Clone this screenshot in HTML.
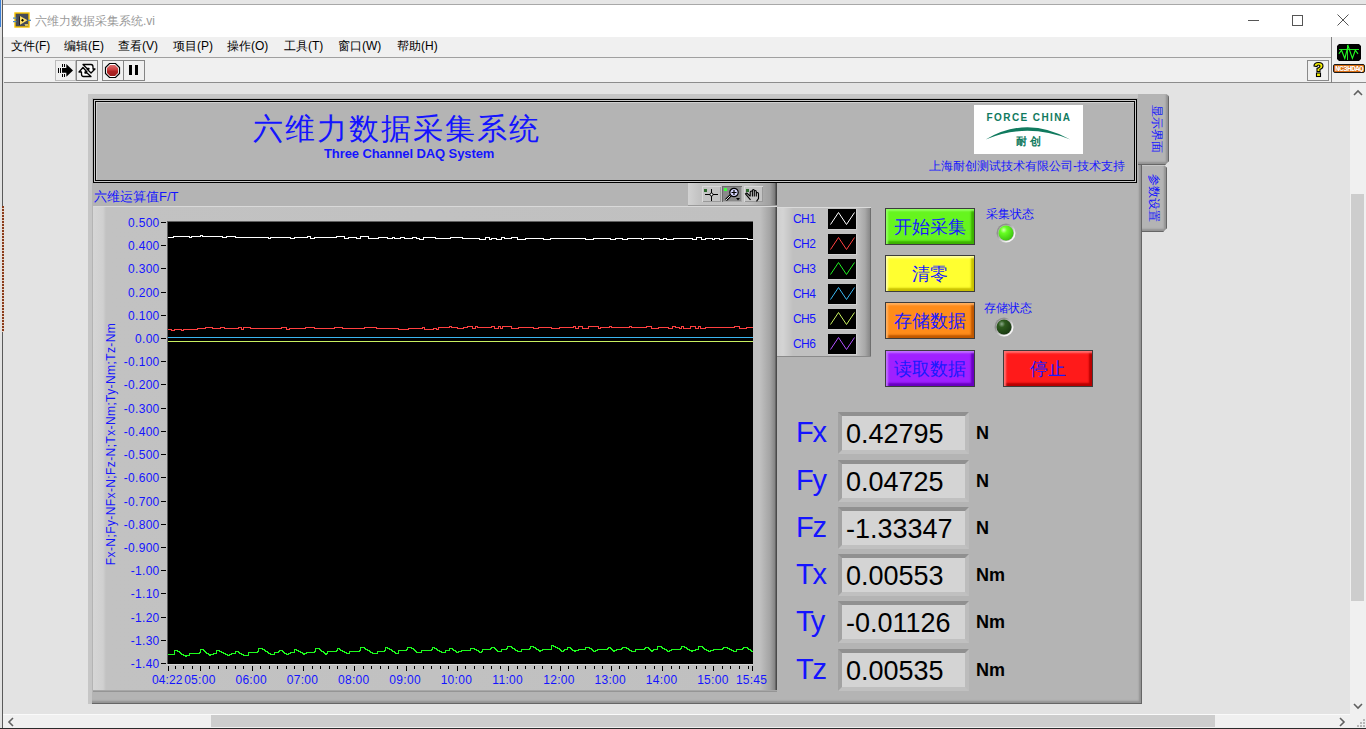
<!DOCTYPE html><html><head><meta charset="utf-8"><style>
*{margin:0;padding:0;box-sizing:border-box}
html,body{width:1366px;height:729px;overflow:hidden;background:#e3e3e3;font-family:"Liberation Sans",sans-serif;position:relative}
.a{position:absolute}
.blue{color:#1414ff}
</style></head><body><div class="a" style="left:0;top:0;width:1366px;height:5px;background:#e6e6e6;border-bottom:1px solid #a8a8a8"></div>
<div class="a" style="left:0;top:0;width:3px;height:729px;background:#e3e3e3;border-right:1px solid #5a5a5a"></div>
<div class="a" style="left:2px;top:206px;width:2px;height:126px;background:repeating-linear-gradient(180deg,#8a3c1c 0,#8a3c1c 2px,#e8d0c0 2px,#e8d0c0 3px)"></div>
<div class="a" style="left:0;top:0;width:1px;height:27px;background:#3b7fd6"></div>
<div class="a" style="left:3px;top:5px;width:1363px;height:32px;background:#ffffff"></div>
<svg class="a" style="left:13px;top:12px" width="18" height="17"><rect x="2" y="1" width="14" height="14" fill="#454a58" stroke="#f7c200" stroke-width="1.4"/><path d="M6.5 4.5 V13" stroke="#222" stroke-width="1"/><path d="M7 4 L14.5 8.3 L7 12.8 Z" fill="#ffe066"/><path d="M9.5 6.8 L11 8.3 L9.5 9.8 L8 8.3 Z" fill="#000"/><path d="M12 12 L13 14 L14 12 L15 14" stroke="#ffe066" stroke-width="1" fill="none"/><rect x="0" y="5.5" width="3.5" height="1.2" fill="#4a8ac0"/><rect x="0" y="9" width="3.5" height="1.2" fill="#4a8ac0"/><rect x="15" y="7.7" width="3" height="1.2" fill="#4a8ac0"/></svg>
<div class="a" style="left:35px;top:13px;font-size:12px;color:#9a9a9a;white-space:nowrap">六维力数据采集系统.vi</div>
<div class="a" style="left:1248px;top:20px;width:11px;height:1px;background:#555"></div>
<div class="a" style="left:1292px;top:15px;width:11px;height:11px;border:1px solid #555"></div>
<svg class="a" style="left:1337px;top:14px" width="12" height="12"><path d="M0.5 0.5 L11.5 11.5 M11.5 0.5 L0.5 11.5" stroke="#555" stroke-width="1"/></svg>
<div class="a" style="left:4px;top:37px;width:1362px;height:21px;background:#f0f0f0"></div>
<div class="a" style="left:11px;top:38px;font-size:12px;color:#000;white-space:nowrap">文件(F)</div>
<div class="a" style="left:64px;top:38px;font-size:12px;color:#000;white-space:nowrap">编辑(E)</div>
<div class="a" style="left:118px;top:38px;font-size:12px;color:#000;white-space:nowrap">查看(V)</div>
<div class="a" style="left:173px;top:38px;font-size:12px;color:#000;white-space:nowrap">项目(P)</div>
<div class="a" style="left:227px;top:38px;font-size:12px;color:#000;white-space:nowrap">操作(O)</div>
<div class="a" style="left:284px;top:38px;font-size:12px;color:#000;white-space:nowrap">工具(T)</div>
<div class="a" style="left:338px;top:38px;font-size:12px;color:#000;white-space:nowrap">窗口(W)</div>
<div class="a" style="left:397px;top:38px;font-size:12px;color:#000;white-space:nowrap">帮助(H)</div>
<div class="a" style="left:4px;top:57px;width:1329px;height:1px;background:#a0a0a0"></div>
<div class="a" style="left:4px;top:58px;width:1329px;height:24px;background:#f0f0f0"></div>
<div class="a" style="left:4px;top:82px;width:1362px;height:1px;background:#8c8c8c"></div>
<div class="a" style="left:1331px;top:37px;width:1px;height:46px;background:#808080"></div>
<div class="a" style="left:1332px;top:37px;width:34px;height:45px;background:#f0f0f0"></div>
<svg class="a" style="left:1337px;top:44px" width="24" height="17" shape-rendering="crispEdges"><path d="M2 0 H22 L24 2 V15 L22 17 H2 L0 15 V2 Z" fill="#000" shape-rendering="auto"/><rect x="2" y="5" width="20" height="1" fill="#22dd22"/><rect x="10" y="1" width="1" height="15" fill="#22dd22"/><path d="M1.9 9.8 L4.5 6.2 L7.8 14.4 L11.1 1.9 L15.4 14.4 L18.3 6.2 L21 9.8" stroke="#22ff22" stroke-width="1.1" fill="none" shape-rendering="auto"/></svg>
<div class="a" style="left:1333px;top:64px;width:32px;height:9px;background:#d86c12;border:1px solid #1a1a1a;border-radius:2px;font-family:'Liberation Mono',monospace;font-size:8px;line-height:7px;color:#fff;font-weight:bold;text-align:center;letter-spacing:-0.8px;white-space:nowrap;overflow:hidden">NC3HDAQ</div>
<div class="a" style="left:1307px;top:60px;width:22px;height:21px;border:1px solid #8a8a8a;background:#f0f0f0"></div>
<svg class="a" style="left:1311px;top:61px" width="15" height="17"><path d="M3 5 Q3 1.5 7.5 1.5 Q12 1.5 12 5 Q12 7.5 9 8.5 V10.5 H6 V7.5 Q9 6.5 9 5 Q9 4 7.5 4 Q6 4 6 5.5 Z" fill="#f5f000" stroke="#000" stroke-width="1.1"/><rect x="5.5" y="12" width="4" height="3.5" fill="#f5f000" stroke="#000" stroke-width="1.1"/></svg>
<div class="a" style="left:55px;top:60px;width:21px;height:21px;border:1px solid #bcbcbc;background:#efefef"></div>
<svg class="a" style="left:54px;top:60px" width="22" height="20" shape-rendering="crispEdges"><path d="M12.3 4 L19 10.4 L12.3 16.8 V12.8 H8 V8 H12.3 Z" fill="#000" shape-rendering="auto"/><rect x="4" y="8" width="1" height="5" fill="#000"/><rect x="6" y="8" width="1" height="5" fill="#000"/><rect x="8" y="4" width="1" height="3" fill="#000"/><rect x="10" y="4" width="1" height="3" fill="#000"/><rect x="8" y="14" width="1" height="3" fill="#000"/><rect x="10" y="14" width="1" height="3" fill="#000"/></svg>
<div class="a" style="left:76px;top:60px;width:22px;height:21px;border:1px solid #858585;background:#f0f0f0"></div>
<svg class="a" style="left:76px;top:60px" width="22" height="21"><path d="M7 4.5 H15 Q17 4.5 17 7 V9 H19 L15 13 L11 9 H13 V8.5 H11 Z" fill="#fff" stroke="#000" stroke-width="1.3" stroke-linejoin="round"/><path d="M15 16.5 H7.5 Q5.5 16.5 5.5 14 V12 H3 L7 7.5 L11 12 H9 V13 H11 Z" fill="#fff" stroke="#000" stroke-width="1.3" stroke-linejoin="round"/></svg>
<div class="a" style="left:102px;top:60px;width:22px;height:21px;border:1px solid #858585;background:#f0f0f0"></div>
<svg class="a" style="left:104px;top:62px" width="17" height="17"><defs><linearGradient id="stopg" x1="0" y1="0" x2="0" y2="1"><stop offset="0" stop-color="#e07070"/><stop offset="0.45" stop-color="#c83c3c"/><stop offset="0.55" stop-color="#b02424"/><stop offset="1" stop-color="#a01e1e"/></linearGradient></defs><path d="M5.5 1.5 H11.5 L15.5 5.5 V11.5 L11.5 15.5 H5.5 L1.5 11.5 V5.5 Z" fill="#fff" stroke="#000" stroke-width="1.2"/><path d="M6 3 H11 L14 6 V11 L11 14 H6 L3 11 V6 Z" fill="url(#stopg)"/></svg>
<div class="a" style="left:123px;top:60px;width:22px;height:21px;border:1px solid #858585;background:#f0f0f0"></div>
<div class="a" style="left:129px;top:65px;width:3px;height:10px;background:#000"></div>
<div class="a" style="left:135px;top:65px;width:3px;height:10px;background:#000"></div>
<div class="a" style="left:1350px;top:83px;width:16px;height:630px;background:#f0f0f0"></div>
<div class="a" style="left:1351px;top:194px;width:13px;height:407px;background:#cdcdcd"></div>
<svg class="a" style="left:1352px;top:88px" width="12" height="10"><path d="M2 7 L6 3 L10 7" stroke="#606060" stroke-width="1.6" fill="none"/></svg>
<svg class="a" style="left:1352px;top:702px" width="12" height="10"><path d="M2 2 L6 6 L10 2" stroke="#606060" stroke-width="1.6" fill="none"/></svg>
<div class="a" style="left:3px;top:714px;width:1347px;height:15px;background:#f0f0f0;border-top:1px solid #fafafa"></div>
<div class="a" style="left:211px;top:715px;width:1004px;height:12px;background:#cdcdcd"></div>
<svg class="a" style="left:6px;top:716px" width="10" height="12"><path d="M7 2 L3 6 L7 10" stroke="#606060" stroke-width="1.6" fill="none"/></svg>
<svg class="a" style="left:1337px;top:716px" width="10" height="12"><path d="M3 2 L7 6 L3 10" stroke="#606060" stroke-width="1.6" fill="none"/></svg>
<div class="a" style="left:1350px;top:713px;width:16px;height:15px;background:#f0f0f0"></div>
<svg class="a" style="left:1355px;top:717px" width="11" height="11" shape-rendering="crispEdges"><rect x="8" y="2" width="2" height="2" fill="#b8b8b8"/><rect x="5" y="5" width="2" height="2" fill="#b8b8b8"/><rect x="8" y="5" width="2" height="2" fill="#b8b8b8"/><rect x="2" y="8" width="2" height="2" fill="#b8b8b8"/><rect x="5" y="8" width="2" height="2" fill="#b8b8b8"/><rect x="8" y="8" width="2" height="2" fill="#b8b8b8"/></svg>
<div class="a" style="left:0;top:728px;width:1366px;height:1px;background:#2b2b2b"></div>
<div class="a" style="left:88px;top:94px;width:1054px;height:610px;background:#b4b4b4;box-shadow:inset 5px 5px 0 -1px #c6c6c6, inset -1px -1px 0 #666, inset -3px -3px 2px #939393"></div>
<div class="a" style="left:1138px;top:94px;width:31px;height:71px;background:#b4b4b4;clip-path:polygon(0 0,27px 0,29px 0.5px,30.5px 2px,31px 4px,31px 67px,27px 71px,0 71px);box-shadow:inset -1px -1px 0 #666, inset -3px -3px 2px #939393"></div>
<div class="a" style="left:1142px;top:165px;width:25px;height:67px;background:#b4b4b4;clip-path:polygon(0 0,22px 0,25px 3px,25px 63px,21px 67px,0 67px);box-shadow:inset 0 1px 0 #c8c8c8, inset -1px -1px 0 #666, inset -3px -3px 2px #939393"></div>
<div class="a" style="left:1131px;top:122px;width:52px;height:14px;transform:rotate(90deg);font-size:12px;line-height:14px;color:#1414ff;white-space:nowrap;text-align:center">显示界面</div>
<div class="a" style="left:1128px;top:191px;width:52px;height:14px;transform:rotate(90deg);font-size:12px;line-height:14px;color:#1414ff;white-space:nowrap;text-align:center">参数设置</div>
<div class="a" style="left:93px;top:99px;width:1044px;height:84px;border:1px solid #000;background:#c8c8c8"></div>
<div class="a" style="left:95px;top:101px;width:1040px;height:80px;border:1px solid #000;background:#b4b4b4;box-shadow:inset 1px 1px 0 #cfcfcf"></div>
<div class="a" style="left:253px;top:109px;font-family:'Liberation Serif',serif;font-size:30px;line-height:40px;letter-spacing:2px;color:#1414ff;white-space:nowrap">六维力数据采集系统</div>
<div class="a" style="left:324px;top:146px;font-size:13px;line-height:16px;font-weight:bold;letter-spacing:-0.1px;color:#1414ff;white-space:nowrap">Three Channel DAQ System</div>
<div class="a" style="left:974px;top:105px;width:109px;height:49px;background:#fff"></div>
<div class="a" style="left:980px;top:111px;width:98px;font-size:10px;line-height:14px;font-weight:bold;color:#107a5e;white-space:nowrap;letter-spacing:1.4px;text-align:center">FORCE CHINA</div>
<svg class="a" style="left:984px;top:124px" width="90" height="16"><path d="M1.6 15.5 Q43 -9 86.2 15.5 Q43 -2 1.6 15.5 Z" fill="#107a5e"/></svg>
<div class="a" style="left:1010px;top:134px;width:40px;font-size:11px;line-height:14px;font-weight:bold;color:#107a5e;white-space:nowrap;text-align:center;letter-spacing:3px">耐创</div>
<div class="a" style="left:929px;top:158px;font-size:12px;line-height:16px;color:#1414ff;white-space:nowrap">上海耐创测试技术有限公司-技术支持</div>
<div class="a" style="left:94px;top:189px;font-size:13px;line-height:16px;color:#1414ff;white-space:nowrap">六维运算值F/T</div>
<div class="a" style="left:688px;top:183px;width:89px;height:23px;background:linear-gradient(90deg,#d2d2d2 0,#c2c2c2 12px,#c0c0c0 60px,#a0a0a0 82px,#7a7a7a 87px,#444 88px);box-shadow:inset 0 -1px 0 #9a9a9a"></div>
<div class="a" style="left:702px;top:186px;width:19px;height:16px;background:#c4c4c4;box-shadow:inset 1px 1px 0 #d8d8d8, inset -1px -1px 0 #999"></div>
<svg class="a" style="left:702px;top:186px" width="19" height="16"><rect x="2" y="3" width="3" height="3" fill="#2e6a2e"/><path d="M3 8.5 H16 M9.5 3 V15" stroke="#000" stroke-width="1"/><circle cx="9.5" cy="8.5" r="1.5" fill="#fff" stroke="#000" stroke-width="1"/></svg>
<div class="a" style="left:722px;top:186px;width:20px;height:16px;background:#8a8a8a;box-shadow:inset 1px 1px 0 #6a6a6a, inset -1px -1px 0 #aaa"></div>
<svg class="a" style="left:722px;top:186px" width="20" height="16"><rect x="2" y="2" width="3" height="3" fill="#40ff40"/><path d="M4 14 L9 9" stroke="#000" stroke-width="2.5"/><path d="M4 14 L9 9" stroke="#ddd" stroke-width="1"/><circle cx="12" cy="6.5" r="4.2" fill="#d8d8ff" stroke="#000" stroke-width="1.2"/><path d="M12 4 V9 M9.5 6.5 H14.5" stroke="#000" stroke-width="1.2"/><path d="M14 12 H18 L16 14.5 Z" fill="#000"/></svg>
<div class="a" style="left:744px;top:186px;width:19px;height:16px;background:#c4c4c4;box-shadow:inset 1px 1px 0 #d8d8d8, inset -1px -1px 0 #999"></div>
<svg class="a" style="left:744px;top:186px" width="19" height="16"><rect x="2" y="3" width="3" height="3" fill="#2e6a2e"/><path d="M6.5 13.8 L1.5 7.8 L2.8 7 L5.8 9.8 M6.2 10.5 V6.5 Q6.2 5 7.3 5 Q8.4 5 8.4 6.5 V10.4 M8.4 6 V4.5 Q8.4 3.5 9.4 3.5 Q10.3 3.5 10.3 4.5 V10.4 M10.3 5.5 Q10.3 4.5 11.3 4.5 Q12.3 4.5 12.3 5.5 V10.4 M12.3 7.5 Q12.3 6.5 13.4 6.5 Q14.5 6.5 14.5 7.8 V12.6 L12.5 15.3" stroke="#000" stroke-width="1.1" fill="none"/></svg>
<div class="a" style="left:93px;top:206px;width:684px;height:486px;background:linear-gradient(90deg,#d6d6d6 0,#d0d0d0 10px,#c2c2c2 13px,#c0c0c0 667px,#a4a4a4 677px,#848484 682px,#4a4a4a 683px);box-shadow:inset 0 1px 0 #d9d9d9, inset 0 -1px 0 #888"></div>
<div class="a" style="left:93px;top:690px;width:684px;height:2px;background:linear-gradient(180deg,#b0b0b0,#8c8c8c)"></div>
<div class="a" style="left:167px;top:221px;width:586px;height:443px;background:#000;box-shadow:inset 1px 1px 0 #606060"></div>
<div class="a" style="left:167px;top:664px;width:586px;height:1px;background:#d4d4d4"></div>
<div class="a" style="left:161px;top:222px;width:5px;height:1px;background:#000"></div>
<div class="a" style="left:60px;top:215px;width:99.6px;text-align:right;font-size:12px;line-height:16px;letter-spacing:0.3px;color:#1414ff">0.500</div>
<div class="a" style="left:161px;top:245px;width:5px;height:1px;background:#000"></div>
<div class="a" style="left:60px;top:238px;width:99.6px;text-align:right;font-size:12px;line-height:16px;letter-spacing:0.3px;color:#1414ff">0.400</div>
<div class="a" style="left:161px;top:268px;width:5px;height:1px;background:#000"></div>
<div class="a" style="left:60px;top:261px;width:99.6px;text-align:right;font-size:12px;line-height:16px;letter-spacing:0.3px;color:#1414ff">0.300</div>
<div class="a" style="left:161px;top:292px;width:5px;height:1px;background:#000"></div>
<div class="a" style="left:60px;top:285px;width:99.6px;text-align:right;font-size:12px;line-height:16px;letter-spacing:0.3px;color:#1414ff">0.200</div>
<div class="a" style="left:161px;top:315px;width:5px;height:1px;background:#000"></div>
<div class="a" style="left:60px;top:308px;width:99.6px;text-align:right;font-size:12px;line-height:16px;letter-spacing:0.3px;color:#1414ff">0.100</div>
<div class="a" style="left:161px;top:338px;width:5px;height:1px;background:#000"></div>
<div class="a" style="left:60px;top:331px;width:99.6px;text-align:right;font-size:12px;line-height:16px;letter-spacing:0.3px;color:#1414ff">0.00</div>
<div class="a" style="left:161px;top:361px;width:5px;height:1px;background:#000"></div>
<div class="a" style="left:60px;top:354px;width:99.6px;text-align:right;font-size:12px;line-height:16px;letter-spacing:0.3px;color:#1414ff">-0.100</div>
<div class="a" style="left:161px;top:384px;width:5px;height:1px;background:#000"></div>
<div class="a" style="left:60px;top:377px;width:99.6px;text-align:right;font-size:12px;line-height:16px;letter-spacing:0.3px;color:#1414ff">-0.200</div>
<div class="a" style="left:161px;top:408px;width:5px;height:1px;background:#000"></div>
<div class="a" style="left:60px;top:401px;width:99.6px;text-align:right;font-size:12px;line-height:16px;letter-spacing:0.3px;color:#1414ff">-0.300</div>
<div class="a" style="left:161px;top:431px;width:5px;height:1px;background:#000"></div>
<div class="a" style="left:60px;top:424px;width:99.6px;text-align:right;font-size:12px;line-height:16px;letter-spacing:0.3px;color:#1414ff">-0.400</div>
<div class="a" style="left:161px;top:454px;width:5px;height:1px;background:#000"></div>
<div class="a" style="left:60px;top:447px;width:99.6px;text-align:right;font-size:12px;line-height:16px;letter-spacing:0.3px;color:#1414ff">-0.500</div>
<div class="a" style="left:161px;top:477px;width:5px;height:1px;background:#000"></div>
<div class="a" style="left:60px;top:470px;width:99.6px;text-align:right;font-size:12px;line-height:16px;letter-spacing:0.3px;color:#1414ff">-0.600</div>
<div class="a" style="left:161px;top:501px;width:5px;height:1px;background:#000"></div>
<div class="a" style="left:60px;top:494px;width:99.6px;text-align:right;font-size:12px;line-height:16px;letter-spacing:0.3px;color:#1414ff">-0.700</div>
<div class="a" style="left:161px;top:524px;width:5px;height:1px;background:#000"></div>
<div class="a" style="left:60px;top:517px;width:99.6px;text-align:right;font-size:12px;line-height:16px;letter-spacing:0.3px;color:#1414ff">-0.800</div>
<div class="a" style="left:161px;top:547px;width:5px;height:1px;background:#000"></div>
<div class="a" style="left:60px;top:540px;width:99.6px;text-align:right;font-size:12px;line-height:16px;letter-spacing:0.3px;color:#1414ff">-0.900</div>
<div class="a" style="left:161px;top:570px;width:5px;height:1px;background:#000"></div>
<div class="a" style="left:60px;top:563px;width:99.6px;text-align:right;font-size:12px;line-height:16px;letter-spacing:0.3px;color:#1414ff">-1.00</div>
<div class="a" style="left:161px;top:593px;width:5px;height:1px;background:#000"></div>
<div class="a" style="left:60px;top:586px;width:99.6px;text-align:right;font-size:12px;line-height:16px;letter-spacing:0.3px;color:#1414ff">-1.10</div>
<div class="a" style="left:161px;top:617px;width:5px;height:1px;background:#000"></div>
<div class="a" style="left:60px;top:610px;width:99.6px;text-align:right;font-size:12px;line-height:16px;letter-spacing:0.3px;color:#1414ff">-1.20</div>
<div class="a" style="left:161px;top:640px;width:5px;height:1px;background:#000"></div>
<div class="a" style="left:60px;top:633px;width:99.6px;text-align:right;font-size:12px;line-height:16px;letter-spacing:0.3px;color:#1414ff">-1.30</div>
<div class="a" style="left:161px;top:663px;width:5px;height:1px;background:#000"></div>
<div class="a" style="left:60px;top:656px;width:99.6px;text-align:right;font-size:12px;line-height:16px;letter-spacing:0.3px;color:#1414ff">-1.40</div>
<div class="a" style="left:-19px;top:437px;width:260px;height:14px;transform:rotate(-90deg);text-align:center;font-size:12px;line-height:14px;letter-spacing:0.4px;color:#1414ff;white-space:nowrap">Fx-N;Fy-NFx-N;Fz-N;Tx-Nm;Ty-Nm;Tz-Nm</div>
<div class="a" style="left:175px;top:666px;width:1px;height:3px;background:#000"></div>
<div class="a" style="left:183px;top:666px;width:1px;height:3px;background:#000"></div>
<div class="a" style="left:192px;top:666px;width:1px;height:3px;background:#000"></div>
<div class="a" style="left:200px;top:666px;width:1px;height:5px;background:#000"></div>
<div class="a" style="left:209px;top:666px;width:1px;height:3px;background:#000"></div>
<div class="a" style="left:218px;top:666px;width:1px;height:3px;background:#000"></div>
<div class="a" style="left:226px;top:666px;width:1px;height:3px;background:#000"></div>
<div class="a" style="left:235px;top:666px;width:1px;height:3px;background:#000"></div>
<div class="a" style="left:243px;top:666px;width:1px;height:3px;background:#000"></div>
<div class="a" style="left:252px;top:666px;width:1px;height:5px;background:#000"></div>
<div class="a" style="left:260px;top:666px;width:1px;height:3px;background:#000"></div>
<div class="a" style="left:269px;top:666px;width:1px;height:3px;background:#000"></div>
<div class="a" style="left:277px;top:666px;width:1px;height:3px;background:#000"></div>
<div class="a" style="left:286px;top:666px;width:1px;height:3px;background:#000"></div>
<div class="a" style="left:294px;top:666px;width:1px;height:3px;background:#000"></div>
<div class="a" style="left:303px;top:666px;width:1px;height:5px;background:#000"></div>
<div class="a" style="left:312px;top:666px;width:1px;height:3px;background:#000"></div>
<div class="a" style="left:320px;top:666px;width:1px;height:3px;background:#000"></div>
<div class="a" style="left:329px;top:666px;width:1px;height:3px;background:#000"></div>
<div class="a" style="left:337px;top:666px;width:1px;height:3px;background:#000"></div>
<div class="a" style="left:346px;top:666px;width:1px;height:3px;background:#000"></div>
<div class="a" style="left:354px;top:666px;width:1px;height:5px;background:#000"></div>
<div class="a" style="left:363px;top:666px;width:1px;height:3px;background:#000"></div>
<div class="a" style="left:371px;top:666px;width:1px;height:3px;background:#000"></div>
<div class="a" style="left:380px;top:666px;width:1px;height:3px;background:#000"></div>
<div class="a" style="left:388px;top:666px;width:1px;height:3px;background:#000"></div>
<div class="a" style="left:397px;top:666px;width:1px;height:3px;background:#000"></div>
<div class="a" style="left:406px;top:666px;width:1px;height:5px;background:#000"></div>
<div class="a" style="left:414px;top:666px;width:1px;height:3px;background:#000"></div>
<div class="a" style="left:423px;top:666px;width:1px;height:3px;background:#000"></div>
<div class="a" style="left:431px;top:666px;width:1px;height:3px;background:#000"></div>
<div class="a" style="left:440px;top:666px;width:1px;height:3px;background:#000"></div>
<div class="a" style="left:448px;top:666px;width:1px;height:3px;background:#000"></div>
<div class="a" style="left:457px;top:666px;width:1px;height:5px;background:#000"></div>
<div class="a" style="left:465px;top:666px;width:1px;height:3px;background:#000"></div>
<div class="a" style="left:474px;top:666px;width:1px;height:3px;background:#000"></div>
<div class="a" style="left:483px;top:666px;width:1px;height:3px;background:#000"></div>
<div class="a" style="left:491px;top:666px;width:1px;height:3px;background:#000"></div>
<div class="a" style="left:500px;top:666px;width:1px;height:3px;background:#000"></div>
<div class="a" style="left:508px;top:666px;width:1px;height:5px;background:#000"></div>
<div class="a" style="left:517px;top:666px;width:1px;height:3px;background:#000"></div>
<div class="a" style="left:525px;top:666px;width:1px;height:3px;background:#000"></div>
<div class="a" style="left:534px;top:666px;width:1px;height:3px;background:#000"></div>
<div class="a" style="left:542px;top:666px;width:1px;height:3px;background:#000"></div>
<div class="a" style="left:551px;top:666px;width:1px;height:3px;background:#000"></div>
<div class="a" style="left:560px;top:666px;width:1px;height:5px;background:#000"></div>
<div class="a" style="left:568px;top:666px;width:1px;height:3px;background:#000"></div>
<div class="a" style="left:577px;top:666px;width:1px;height:3px;background:#000"></div>
<div class="a" style="left:585px;top:666px;width:1px;height:3px;background:#000"></div>
<div class="a" style="left:594px;top:666px;width:1px;height:3px;background:#000"></div>
<div class="a" style="left:602px;top:666px;width:1px;height:3px;background:#000"></div>
<div class="a" style="left:611px;top:666px;width:1px;height:5px;background:#000"></div>
<div class="a" style="left:619px;top:666px;width:1px;height:3px;background:#000"></div>
<div class="a" style="left:628px;top:666px;width:1px;height:3px;background:#000"></div>
<div class="a" style="left:636px;top:666px;width:1px;height:3px;background:#000"></div>
<div class="a" style="left:645px;top:666px;width:1px;height:3px;background:#000"></div>
<div class="a" style="left:654px;top:666px;width:1px;height:3px;background:#000"></div>
<div class="a" style="left:662px;top:666px;width:1px;height:5px;background:#000"></div>
<div class="a" style="left:671px;top:666px;width:1px;height:3px;background:#000"></div>
<div class="a" style="left:679px;top:666px;width:1px;height:3px;background:#000"></div>
<div class="a" style="left:688px;top:666px;width:1px;height:3px;background:#000"></div>
<div class="a" style="left:696px;top:666px;width:1px;height:3px;background:#000"></div>
<div class="a" style="left:705px;top:666px;width:1px;height:3px;background:#000"></div>
<div class="a" style="left:713px;top:666px;width:1px;height:5px;background:#000"></div>
<div class="a" style="left:722px;top:666px;width:1px;height:3px;background:#000"></div>
<div class="a" style="left:730px;top:666px;width:1px;height:3px;background:#000"></div>
<div class="a" style="left:739px;top:666px;width:1px;height:3px;background:#000"></div>
<div class="a" style="left:748px;top:666px;width:1px;height:3px;background:#000"></div>
<div class="a" style="left:168px;top:666px;width:1px;height:5px;background:#000"></div>
<div class="a" style="left:752px;top:666px;width:1px;height:5px;background:#000"></div>
<div class="a" style="left:174.9px;top:672px;width:50px;text-align:center;font-size:12px;line-height:16px;letter-spacing:0.3px;color:#1414ff">05:00</div>
<div class="a" style="left:226.2px;top:672px;width:50px;text-align:center;font-size:12px;line-height:16px;letter-spacing:0.3px;color:#1414ff">06:00</div>
<div class="a" style="left:277.5px;top:672px;width:50px;text-align:center;font-size:12px;line-height:16px;letter-spacing:0.3px;color:#1414ff">07:00</div>
<div class="a" style="left:328.8px;top:672px;width:50px;text-align:center;font-size:12px;line-height:16px;letter-spacing:0.3px;color:#1414ff">08:00</div>
<div class="a" style="left:380.1px;top:672px;width:50px;text-align:center;font-size:12px;line-height:16px;letter-spacing:0.3px;color:#1414ff">09:00</div>
<div class="a" style="left:431.4px;top:672px;width:50px;text-align:center;font-size:12px;line-height:16px;letter-spacing:0.3px;color:#1414ff">10:00</div>
<div class="a" style="left:482.7px;top:672px;width:50px;text-align:center;font-size:12px;line-height:16px;letter-spacing:0.3px;color:#1414ff">11:00</div>
<div class="a" style="left:534.0px;top:672px;width:50px;text-align:center;font-size:12px;line-height:16px;letter-spacing:0.3px;color:#1414ff">12:00</div>
<div class="a" style="left:585.3px;top:672px;width:50px;text-align:center;font-size:12px;line-height:16px;letter-spacing:0.3px;color:#1414ff">13:00</div>
<div class="a" style="left:636.6px;top:672px;width:50px;text-align:center;font-size:12px;line-height:16px;letter-spacing:0.3px;color:#1414ff">14:00</div>
<div class="a" style="left:687.9px;top:672px;width:50px;text-align:center;font-size:12px;line-height:16px;letter-spacing:0.3px;color:#1414ff">15:00</div>
<div class="a" style="left:152px;top:672px;letter-spacing:0.1px;font-size:12px;line-height:16px;color:#1414ff">04:22</div>
<div class="a" style="left:736px;top:672px;letter-spacing:0.2px;font-size:12px;line-height:16px;color:#1414ff">15:45</div>
<svg class="a" style="left:0;top:0" width="1366" height="729" shape-rendering="crispEdges"><path d="M168 237h1v1h-1zM169 237h1v1h-1zM170 237h1v1h-1zM171 237h1v1h-1zM172 237h1v1h-1zM173 236h1v2h-1zM174 236h1v1h-1zM175 236h1v1h-1zM176 236h1v1h-1zM177 236h1v1h-1zM178 236h1v1h-1zM179 236h1v1h-1zM180 236h1v1h-1zM181 236h1v1h-1zM182 236h1v1h-1zM183 236h1v1h-1zM184 236h1v1h-1zM185 236h1v1h-1zM186 236h1v1h-1zM187 236h1v1h-1zM188 236h1v1h-1zM189 236h1v2h-1zM190 237h1v1h-1zM191 236h1v2h-1zM192 236h1v1h-1zM193 236h1v1h-1zM194 236h1v1h-1zM195 236h1v1h-1zM196 236h1v1h-1zM197 236h1v1h-1zM198 236h1v1h-1zM199 236h1v1h-1zM200 235h1v2h-1zM201 235h1v1h-1zM202 235h1v2h-1zM203 236h1v1h-1zM204 236h1v1h-1zM205 236h1v1h-1zM206 236h1v1h-1zM207 236h1v1h-1zM208 236h1v1h-1zM209 236h1v1h-1zM210 236h1v1h-1zM211 236h1v1h-1zM212 236h1v1h-1zM213 236h1v1h-1zM214 236h1v1h-1zM215 236h1v1h-1zM216 236h1v1h-1zM217 236h1v1h-1zM218 236h1v1h-1zM219 236h1v1h-1zM220 236h1v1h-1zM221 236h1v1h-1zM222 236h1v2h-1zM223 237h1v1h-1zM224 237h1v1h-1zM225 237h1v1h-1zM226 236h1v2h-1zM227 236h1v1h-1zM228 236h1v1h-1zM229 236h1v1h-1zM230 236h1v1h-1zM231 236h1v1h-1zM232 236h1v1h-1zM233 236h1v1h-1zM234 236h1v1h-1zM235 236h1v2h-1zM236 237h1v1h-1zM237 237h1v1h-1zM238 237h1v1h-1zM239 237h1v1h-1zM240 237h1v1h-1zM241 237h1v1h-1zM242 237h1v1h-1zM243 237h1v1h-1zM244 237h1v1h-1zM245 237h1v1h-1zM246 237h1v1h-1zM247 237h1v1h-1zM248 237h1v1h-1zM249 237h1v1h-1zM250 237h1v1h-1zM251 237h1v1h-1zM252 237h1v1h-1zM253 237h1v1h-1zM254 237h1v1h-1zM255 237h1v1h-1zM256 237h1v1h-1zM257 237h1v1h-1zM258 237h1v1h-1zM259 237h1v1h-1zM260 237h1v1h-1zM261 237h1v1h-1zM262 237h1v1h-1zM263 237h1v1h-1zM264 237h1v1h-1zM265 237h1v1h-1zM266 237h1v1h-1zM267 237h1v1h-1zM268 237h1v2h-1zM269 238h1v1h-1zM270 237h1v2h-1zM271 237h1v1h-1zM272 237h1v1h-1zM273 237h1v1h-1zM274 237h1v1h-1zM275 237h1v1h-1zM276 237h1v1h-1zM277 237h1v1h-1zM278 237h1v1h-1zM279 237h1v1h-1zM280 237h1v1h-1zM281 237h1v1h-1zM282 237h1v1h-1zM283 237h1v1h-1zM284 237h1v1h-1zM285 237h1v1h-1zM286 237h1v1h-1zM287 237h1v1h-1zM288 237h1v1h-1zM289 237h1v1h-1zM290 237h1v2h-1zM291 238h1v1h-1zM292 238h1v1h-1zM293 238h1v1h-1zM294 237h1v2h-1zM295 237h1v1h-1zM296 237h1v1h-1zM297 237h1v1h-1zM298 237h1v1h-1zM299 237h1v1h-1zM300 237h1v1h-1zM301 237h1v1h-1zM302 237h1v1h-1zM303 237h1v1h-1zM304 237h1v1h-1zM305 237h1v1h-1zM306 237h1v1h-1zM307 236h1v2h-1zM308 236h1v1h-1zM309 236h1v1h-1zM310 236h1v3h-1zM311 238h1v1h-1zM312 238h1v1h-1zM313 238h1v1h-1zM314 237h1v2h-1zM315 237h1v1h-1zM316 237h1v1h-1zM317 237h1v1h-1zM318 237h1v1h-1zM319 237h1v1h-1zM320 237h1v1h-1zM321 237h1v1h-1zM322 237h1v1h-1zM323 237h1v1h-1zM324 237h1v1h-1zM325 237h1v1h-1zM326 237h1v1h-1zM327 237h1v1h-1zM328 237h1v1h-1zM329 237h1v1h-1zM330 237h1v1h-1zM331 237h1v1h-1zM332 237h1v1h-1zM333 237h1v1h-1zM334 237h1v1h-1zM335 237h1v1h-1zM336 236h1v2h-1zM337 236h1v1h-1zM338 236h1v1h-1zM339 236h1v1h-1zM340 236h1v1h-1zM341 236h1v1h-1zM342 236h1v1h-1zM343 236h1v1h-1zM344 236h1v3h-1zM345 238h1v1h-1zM346 238h1v1h-1zM347 238h1v1h-1zM348 237h1v2h-1zM349 237h1v1h-1zM350 237h1v1h-1zM351 237h1v1h-1zM352 237h1v1h-1zM353 237h1v1h-1zM354 237h1v1h-1zM355 237h1v1h-1zM356 237h1v2h-1zM357 238h1v1h-1zM358 238h1v1h-1zM359 238h1v1h-1zM360 236h1v3h-1zM361 236h1v1h-1zM362 236h1v1h-1zM363 236h1v1h-1zM364 236h1v1h-1zM365 236h1v1h-1zM366 236h1v1h-1zM367 236h1v1h-1zM368 236h1v3h-1zM369 238h1v1h-1zM370 238h1v1h-1zM371 238h1v1h-1zM372 238h1v1h-1zM373 238h1v1h-1zM374 238h1v1h-1zM375 238h1v1h-1zM376 238h1v1h-1zM377 238h1v1h-1zM378 237h1v2h-1zM379 237h1v1h-1zM380 237h1v1h-1zM381 237h1v1h-1zM382 237h1v1h-1zM383 237h1v1h-1zM384 237h1v1h-1zM385 237h1v1h-1zM386 237h1v1h-1zM387 237h1v2h-1zM388 238h1v1h-1zM389 238h1v1h-1zM390 238h1v1h-1zM391 238h1v1h-1zM392 237h1v2h-1zM393 237h1v1h-1zM394 237h1v2h-1zM395 238h1v1h-1zM396 238h1v1h-1zM397 238h1v1h-1zM398 238h1v1h-1zM399 238h1v1h-1zM400 237h1v2h-1zM401 237h1v1h-1zM402 237h1v1h-1zM403 237h1v1h-1zM404 237h1v2h-1zM405 238h1v1h-1zM406 238h1v1h-1zM407 238h1v1h-1zM408 238h1v1h-1zM409 238h1v1h-1zM410 238h1v1h-1zM411 238h1v1h-1zM412 237h1v2h-1zM413 237h1v1h-1zM414 237h1v1h-1zM415 237h1v1h-1zM416 237h1v2h-1zM417 238h1v1h-1zM418 238h1v1h-1zM419 238h1v2h-1zM420 239h1v1h-1zM421 239h1v1h-1zM422 239h1v1h-1zM423 237h1v3h-1zM424 237h1v1h-1zM425 237h1v1h-1zM426 237h1v1h-1zM427 237h1v1h-1zM428 237h1v1h-1zM429 237h1v1h-1zM430 237h1v1h-1zM431 237h1v1h-1zM432 237h1v1h-1zM433 237h1v1h-1zM434 237h1v1h-1zM435 237h1v2h-1zM436 238h1v1h-1zM437 238h1v1h-1zM438 238h1v1h-1zM439 238h1v1h-1zM440 238h1v1h-1zM441 238h1v1h-1zM442 238h1v1h-1zM443 238h1v1h-1zM444 238h1v1h-1zM445 238h1v1h-1zM446 238h1v1h-1zM447 238h1v1h-1zM448 238h1v1h-1zM449 238h1v1h-1zM450 237h1v2h-1zM451 237h1v1h-1zM452 237h1v1h-1zM453 237h1v1h-1zM454 237h1v1h-1zM455 237h1v1h-1zM456 237h1v1h-1zM457 237h1v1h-1zM458 237h1v1h-1zM459 237h1v1h-1zM460 237h1v1h-1zM461 237h1v1h-1zM462 237h1v2h-1zM463 238h1v1h-1zM464 238h1v1h-1zM465 238h1v1h-1zM466 238h1v1h-1zM467 238h1v1h-1zM468 238h1v1h-1zM469 238h1v1h-1zM470 238h1v1h-1zM471 238h1v1h-1zM472 238h1v1h-1zM473 238h1v1h-1zM474 238h1v1h-1zM475 238h1v1h-1zM476 238h1v1h-1zM477 238h1v1h-1zM478 238h1v1h-1zM479 238h1v2h-1zM480 239h1v1h-1zM481 239h1v1h-1zM482 239h1v1h-1zM483 239h1v1h-1zM484 239h1v1h-1zM485 237h1v3h-1zM486 237h1v1h-1zM487 237h1v1h-1zM488 237h1v1h-1zM489 237h1v3h-1zM490 239h1v1h-1zM491 238h1v2h-1zM492 238h1v1h-1zM493 238h1v1h-1zM494 238h1v1h-1zM495 238h1v1h-1zM496 238h1v2h-1zM497 239h1v1h-1zM498 239h1v1h-1zM499 239h1v1h-1zM500 239h1v1h-1zM501 237h1v3h-1zM502 237h1v1h-1zM503 237h1v1h-1zM504 237h1v2h-1zM505 238h1v1h-1zM506 238h1v1h-1zM507 238h1v1h-1zM508 238h1v1h-1zM509 238h1v1h-1zM510 238h1v1h-1zM511 237h1v2h-1zM512 237h1v1h-1zM513 237h1v1h-1zM514 237h1v1h-1zM515 237h1v1h-1zM516 237h1v1h-1zM517 237h1v3h-1zM518 239h1v1h-1zM519 239h1v1h-1zM520 239h1v1h-1zM521 239h1v1h-1zM522 239h1v1h-1zM523 239h1v1h-1zM524 239h1v1h-1zM525 238h1v2h-1zM526 238h1v1h-1zM527 238h1v1h-1zM528 238h1v1h-1zM529 238h1v1h-1zM530 238h1v1h-1zM531 238h1v1h-1zM532 238h1v1h-1zM533 238h1v1h-1zM534 238h1v1h-1zM535 238h1v1h-1zM536 238h1v1h-1zM537 238h1v1h-1zM538 238h1v1h-1zM539 238h1v1h-1zM540 238h1v1h-1zM541 238h1v1h-1zM542 238h1v1h-1zM543 238h1v2h-1zM544 239h1v1h-1zM545 239h1v1h-1zM546 239h1v1h-1zM547 239h1v1h-1zM548 239h1v1h-1zM549 239h1v1h-1zM550 238h1v2h-1zM551 238h1v1h-1zM552 238h1v1h-1zM553 238h1v1h-1zM554 238h1v1h-1zM555 238h1v1h-1zM556 238h1v1h-1zM557 238h1v1h-1zM558 238h1v1h-1zM559 238h1v1h-1zM560 238h1v1h-1zM561 238h1v1h-1zM562 238h1v1h-1zM563 238h1v1h-1zM564 238h1v1h-1zM565 238h1v1h-1zM566 238h1v1h-1zM567 238h1v1h-1zM568 238h1v1h-1zM569 238h1v1h-1zM570 238h1v1h-1zM571 238h1v1h-1zM572 238h1v1h-1zM573 238h1v1h-1zM574 238h1v1h-1zM575 238h1v1h-1zM576 238h1v1h-1zM577 238h1v1h-1zM578 238h1v1h-1zM579 238h1v1h-1zM580 238h1v1h-1zM581 238h1v1h-1zM582 238h1v1h-1zM583 238h1v1h-1zM584 238h1v1h-1zM585 238h1v2h-1zM586 239h1v1h-1zM587 239h1v1h-1zM588 239h1v1h-1zM589 239h1v1h-1zM590 239h1v1h-1zM591 239h1v1h-1zM592 239h1v1h-1zM593 238h1v2h-1zM594 238h1v1h-1zM595 238h1v1h-1zM596 238h1v1h-1zM597 238h1v1h-1zM598 238h1v1h-1zM599 238h1v1h-1zM600 238h1v1h-1zM601 238h1v1h-1zM602 238h1v1h-1zM603 238h1v1h-1zM604 238h1v1h-1zM605 238h1v1h-1zM606 238h1v1h-1zM607 238h1v1h-1zM608 238h1v1h-1zM609 238h1v1h-1zM610 238h1v2h-1zM611 239h1v1h-1zM612 239h1v1h-1zM613 239h1v1h-1zM614 239h1v1h-1zM615 238h1v2h-1zM616 238h1v1h-1zM617 238h1v1h-1zM618 238h1v1h-1zM619 238h1v1h-1zM620 238h1v1h-1zM621 238h1v1h-1zM622 238h1v2h-1zM623 239h1v1h-1zM624 239h1v1h-1zM625 239h1v1h-1zM626 239h1v1h-1zM627 238h1v2h-1zM628 238h1v1h-1zM629 238h1v1h-1zM630 238h1v1h-1zM631 238h1v1h-1zM632 238h1v1h-1zM633 238h1v1h-1zM634 238h1v1h-1zM635 238h1v1h-1zM636 238h1v1h-1zM637 238h1v1h-1zM638 238h1v1h-1zM639 238h1v1h-1zM640 238h1v1h-1zM641 238h1v2h-1zM642 239h1v1h-1zM643 238h1v2h-1zM644 238h1v1h-1zM645 238h1v1h-1zM646 238h1v1h-1zM647 238h1v1h-1zM648 238h1v1h-1zM649 238h1v1h-1zM650 238h1v1h-1zM651 238h1v1h-1zM652 238h1v1h-1zM653 238h1v1h-1zM654 238h1v1h-1zM655 238h1v1h-1zM656 238h1v1h-1zM657 238h1v1h-1zM658 238h1v1h-1zM659 238h1v2h-1zM660 239h1v1h-1zM661 239h1v1h-1zM662 239h1v1h-1zM663 238h1v2h-1zM664 238h1v1h-1zM665 238h1v1h-1zM666 238h1v2h-1zM667 239h1v1h-1zM668 239h1v1h-1zM669 239h1v1h-1zM670 239h1v1h-1zM671 239h1v1h-1zM672 239h1v1h-1zM673 238h1v2h-1zM674 238h1v1h-1zM675 238h1v1h-1zM676 238h1v1h-1zM677 238h1v1h-1zM678 238h1v1h-1zM679 238h1v1h-1zM680 238h1v1h-1zM681 238h1v1h-1zM682 238h1v1h-1zM683 238h1v1h-1zM684 238h1v1h-1zM685 238h1v1h-1zM686 238h1v1h-1zM687 238h1v1h-1zM688 238h1v1h-1zM689 238h1v1h-1zM690 238h1v1h-1zM691 238h1v1h-1zM692 238h1v2h-1zM693 239h1v1h-1zM694 239h1v1h-1zM695 239h1v1h-1zM696 237h1v3h-1zM697 237h1v1h-1zM698 237h1v1h-1zM699 237h1v1h-1zM700 237h1v1h-1zM701 237h1v3h-1zM702 239h1v1h-1zM703 239h1v1h-1zM704 239h1v1h-1zM705 238h1v2h-1zM706 238h1v1h-1zM707 238h1v1h-1zM708 238h1v1h-1zM709 238h1v1h-1zM710 238h1v1h-1zM711 238h1v1h-1zM712 238h1v2h-1zM713 239h1v1h-1zM714 238h1v2h-1zM715 238h1v1h-1zM716 238h1v1h-1zM717 238h1v1h-1zM718 238h1v1h-1zM719 238h1v2h-1zM720 239h1v1h-1zM721 239h1v1h-1zM722 239h1v1h-1zM723 238h1v2h-1zM724 238h1v1h-1zM725 238h1v1h-1zM726 238h1v1h-1zM727 238h1v1h-1zM728 238h1v1h-1zM729 238h1v1h-1zM730 238h1v1h-1zM731 238h1v1h-1zM732 238h1v1h-1zM733 238h1v1h-1zM734 238h1v1h-1zM735 238h1v1h-1zM736 238h1v1h-1zM737 238h1v1h-1zM738 238h1v1h-1zM739 238h1v1h-1zM740 238h1v1h-1zM741 238h1v1h-1zM742 238h1v1h-1zM743 238h1v1h-1zM744 238h1v1h-1zM745 238h1v1h-1zM746 238h1v1h-1zM747 238h1v2h-1zM748 239h1v1h-1zM749 239h1v1h-1zM750 239h1v1h-1zM751 239h1v1h-1zM752 239h1v1h-1z" fill="#ffffff"/><path d="M168 329h1v1h-1zM169 329h1v1h-1zM170 329h1v1h-1zM171 329h1v2h-1zM172 330h1v1h-1zM173 330h1v1h-1zM174 329h1v2h-1zM175 329h1v1h-1zM176 329h1v1h-1zM177 329h1v1h-1zM178 329h1v1h-1zM179 329h1v1h-1zM180 329h1v1h-1zM181 329h1v2h-1zM182 330h1v1h-1zM183 329h1v2h-1zM184 329h1v1h-1zM185 329h1v1h-1zM186 329h1v1h-1zM187 329h1v1h-1zM188 329h1v1h-1zM189 329h1v1h-1zM190 329h1v1h-1zM191 329h1v1h-1zM192 329h1v1h-1zM193 329h1v1h-1zM194 329h1v1h-1zM195 329h1v1h-1zM196 329h1v1h-1zM197 328h1v2h-1zM198 328h1v1h-1zM199 328h1v1h-1zM200 328h1v1h-1zM201 328h1v1h-1zM202 328h1v1h-1zM203 328h1v1h-1zM204 328h1v1h-1zM205 327h1v2h-1zM206 327h1v1h-1zM207 327h1v1h-1zM208 327h1v1h-1zM209 327h1v1h-1zM210 327h1v1h-1zM211 327h1v1h-1zM212 327h1v2h-1zM213 328h1v1h-1zM214 328h1v1h-1zM215 328h1v1h-1zM216 328h1v1h-1zM217 328h1v1h-1zM218 328h1v1h-1zM219 328h1v1h-1zM220 327h1v2h-1zM221 327h1v1h-1zM222 327h1v1h-1zM223 327h1v1h-1zM224 327h1v2h-1zM225 328h1v1h-1zM226 328h1v1h-1zM227 328h1v1h-1zM228 328h1v1h-1zM229 328h1v1h-1zM230 328h1v1h-1zM231 328h1v1h-1zM232 328h1v1h-1zM233 328h1v1h-1zM234 328h1v1h-1zM235 328h1v1h-1zM236 328h1v1h-1zM237 328h1v1h-1zM238 327h1v2h-1zM239 327h1v1h-1zM240 327h1v1h-1zM241 327h1v3h-1zM242 329h1v1h-1zM243 327h1v3h-1zM244 327h1v1h-1zM245 327h1v1h-1zM246 327h1v1h-1zM247 327h1v1h-1zM248 327h1v1h-1zM249 327h1v1h-1zM250 327h1v2h-1zM251 328h1v1h-1zM252 328h1v1h-1zM253 328h1v1h-1zM254 328h1v1h-1zM255 328h1v1h-1zM256 328h1v1h-1zM257 328h1v1h-1zM258 328h1v1h-1zM259 328h1v1h-1zM260 328h1v1h-1zM261 328h1v1h-1zM262 328h1v1h-1zM263 328h1v1h-1zM264 328h1v1h-1zM265 328h1v1h-1zM266 328h1v1h-1zM267 328h1v1h-1zM268 328h1v1h-1zM269 328h1v1h-1zM270 328h1v1h-1zM271 328h1v1h-1zM272 328h1v1h-1zM273 328h1v1h-1zM274 328h1v1h-1zM275 328h1v1h-1zM276 328h1v1h-1zM277 328h1v1h-1zM278 328h1v1h-1zM279 328h1v1h-1zM280 328h1v1h-1zM281 327h1v2h-1zM282 327h1v1h-1zM283 327h1v1h-1zM284 327h1v1h-1zM285 327h1v1h-1zM286 327h1v3h-1zM287 329h1v1h-1zM288 329h1v1h-1zM289 328h1v2h-1zM290 328h1v1h-1zM291 328h1v1h-1zM292 328h1v1h-1zM293 328h1v1h-1zM294 328h1v1h-1zM295 328h1v1h-1zM296 328h1v1h-1zM297 328h1v1h-1zM298 328h1v1h-1zM299 328h1v1h-1zM300 328h1v1h-1zM301 328h1v1h-1zM302 328h1v1h-1zM303 328h1v1h-1zM304 328h1v1h-1zM305 327h1v2h-1zM306 327h1v1h-1zM307 327h1v1h-1zM308 327h1v1h-1zM309 327h1v1h-1zM310 327h1v1h-1zM311 327h1v1h-1zM312 327h1v1h-1zM313 327h1v1h-1zM314 327h1v2h-1zM315 328h1v1h-1zM316 328h1v1h-1zM317 328h1v1h-1zM318 328h1v1h-1zM319 328h1v1h-1zM320 328h1v1h-1zM321 328h1v1h-1zM322 328h1v1h-1zM323 328h1v1h-1zM324 328h1v1h-1zM325 328h1v1h-1zM326 328h1v1h-1zM327 328h1v1h-1zM328 328h1v1h-1zM329 328h1v1h-1zM330 328h1v1h-1zM331 328h1v1h-1zM332 328h1v1h-1zM333 328h1v1h-1zM334 327h1v2h-1zM335 327h1v1h-1zM336 327h1v1h-1zM337 327h1v1h-1zM338 327h1v1h-1zM339 327h1v1h-1zM340 327h1v1h-1zM341 327h1v1h-1zM342 327h1v2h-1zM343 328h1v1h-1zM344 328h1v1h-1zM345 328h1v1h-1zM346 328h1v1h-1zM347 328h1v1h-1zM348 328h1v1h-1zM349 328h1v1h-1zM350 328h1v1h-1zM351 328h1v1h-1zM352 328h1v1h-1zM353 328h1v1h-1zM354 328h1v1h-1zM355 328h1v1h-1zM356 328h1v1h-1zM357 328h1v1h-1zM358 328h1v1h-1zM359 328h1v1h-1zM360 328h1v1h-1zM361 328h1v1h-1zM362 328h1v1h-1zM363 328h1v1h-1zM364 327h1v2h-1zM365 327h1v1h-1zM366 327h1v1h-1zM367 327h1v1h-1zM368 327h1v1h-1zM369 327h1v1h-1zM370 327h1v1h-1zM371 327h1v1h-1zM372 327h1v1h-1zM373 327h1v1h-1zM374 327h1v1h-1zM375 327h1v1h-1zM376 327h1v2h-1zM377 328h1v1h-1zM378 328h1v1h-1zM379 328h1v1h-1zM380 328h1v1h-1zM381 328h1v1h-1zM382 328h1v1h-1zM383 328h1v1h-1zM384 328h1v1h-1zM385 328h1v1h-1zM386 328h1v1h-1zM387 328h1v1h-1zM388 328h1v1h-1zM389 328h1v1h-1zM390 328h1v1h-1zM391 328h1v1h-1zM392 328h1v1h-1zM393 328h1v1h-1zM394 328h1v1h-1zM395 328h1v1h-1zM396 328h1v1h-1zM397 328h1v1h-1zM398 328h1v2h-1zM399 329h1v1h-1zM400 329h1v1h-1zM401 329h1v1h-1zM402 329h1v1h-1zM403 329h1v1h-1zM404 329h1v1h-1zM405 329h1v1h-1zM406 329h1v1h-1zM407 329h1v1h-1zM408 328h1v2h-1zM409 328h1v1h-1zM410 328h1v1h-1zM411 328h1v1h-1zM412 328h1v1h-1zM413 328h1v1h-1zM414 328h1v1h-1zM415 328h1v1h-1zM416 328h1v1h-1zM417 328h1v1h-1zM418 328h1v1h-1zM419 328h1v1h-1zM420 328h1v1h-1zM421 328h1v1h-1zM422 327h1v2h-1zM423 327h1v1h-1zM424 327h1v3h-1zM425 329h1v1h-1zM426 329h1v1h-1zM427 329h1v1h-1zM428 329h1v1h-1zM429 329h1v1h-1zM430 329h1v1h-1zM431 329h1v1h-1zM432 329h1v1h-1zM433 328h1v2h-1zM434 328h1v1h-1zM435 328h1v1h-1zM436 328h1v2h-1zM437 329h1v1h-1zM438 327h1v3h-1zM439 327h1v1h-1zM440 327h1v1h-1zM441 327h1v1h-1zM442 327h1v1h-1zM443 327h1v1h-1zM444 327h1v1h-1zM445 327h1v1h-1zM446 327h1v1h-1zM447 327h1v1h-1zM448 327h1v1h-1zM449 326h1v2h-1zM450 326h1v1h-1zM451 326h1v2h-1zM452 327h1v1h-1zM453 327h1v1h-1zM454 327h1v1h-1zM455 327h1v1h-1zM456 327h1v1h-1zM457 327h1v2h-1zM458 328h1v1h-1zM459 328h1v1h-1zM460 328h1v1h-1zM461 328h1v1h-1zM462 328h1v1h-1zM463 327h1v2h-1zM464 327h1v1h-1zM465 327h1v1h-1zM466 327h1v1h-1zM467 326h1v2h-1zM468 326h1v1h-1zM469 326h1v1h-1zM470 326h1v1h-1zM471 326h1v1h-1zM472 326h1v3h-1zM473 328h1v1h-1zM474 328h1v1h-1zM475 326h1v3h-1zM476 326h1v1h-1zM477 326h1v2h-1zM478 327h1v1h-1zM479 327h1v1h-1zM480 327h1v1h-1zM481 327h1v1h-1zM482 327h1v1h-1zM483 327h1v1h-1zM484 327h1v1h-1zM485 327h1v1h-1zM486 327h1v1h-1zM487 327h1v1h-1zM488 327h1v1h-1zM489 327h1v1h-1zM490 327h1v1h-1zM491 326h1v2h-1zM492 326h1v1h-1zM493 326h1v1h-1zM494 326h1v3h-1zM495 328h1v1h-1zM496 328h1v1h-1zM497 328h1v1h-1zM498 326h1v3h-1zM499 326h1v1h-1zM500 326h1v3h-1zM501 328h1v1h-1zM502 326h1v3h-1zM503 326h1v1h-1zM504 326h1v1h-1zM505 326h1v1h-1zM506 326h1v1h-1zM507 326h1v1h-1zM508 326h1v1h-1zM509 326h1v1h-1zM510 326h1v1h-1zM511 326h1v3h-1zM512 328h1v1h-1zM513 328h1v1h-1zM514 328h1v1h-1zM515 328h1v1h-1zM516 328h1v1h-1zM517 328h1v1h-1zM518 327h1v2h-1zM519 327h1v1h-1zM520 327h1v1h-1zM521 327h1v1h-1zM522 327h1v1h-1zM523 327h1v1h-1zM524 327h1v1h-1zM525 327h1v1h-1zM526 327h1v1h-1zM527 327h1v1h-1zM528 327h1v1h-1zM529 327h1v1h-1zM530 327h1v1h-1zM531 327h1v1h-1zM532 327h1v1h-1zM533 327h1v2h-1zM534 328h1v1h-1zM535 328h1v1h-1zM536 328h1v1h-1zM537 328h1v1h-1zM538 327h1v2h-1zM539 327h1v1h-1zM540 327h1v1h-1zM541 327h1v1h-1zM542 327h1v1h-1zM543 327h1v1h-1zM544 327h1v1h-1zM545 327h1v1h-1zM546 327h1v1h-1zM547 327h1v1h-1zM548 327h1v1h-1zM549 327h1v1h-1zM550 327h1v1h-1zM551 327h1v2h-1zM552 328h1v1h-1zM553 328h1v1h-1zM554 328h1v1h-1zM555 328h1v1h-1zM556 328h1v1h-1zM557 328h1v1h-1zM558 328h1v1h-1zM559 327h1v2h-1zM560 327h1v1h-1zM561 327h1v1h-1zM562 327h1v1h-1zM563 327h1v1h-1zM564 327h1v1h-1zM565 327h1v1h-1zM566 327h1v1h-1zM567 327h1v1h-1zM568 327h1v1h-1zM569 327h1v1h-1zM570 327h1v1h-1zM571 327h1v1h-1zM572 327h1v1h-1zM573 326h1v2h-1zM574 326h1v1h-1zM575 326h1v3h-1zM576 328h1v1h-1zM577 328h1v1h-1zM578 326h1v3h-1zM579 326h1v1h-1zM580 326h1v1h-1zM581 326h1v1h-1zM582 326h1v3h-1zM583 328h1v1h-1zM584 328h1v1h-1zM585 328h1v1h-1zM586 328h1v1h-1zM587 328h1v1h-1zM588 326h1v3h-1zM589 326h1v1h-1zM590 326h1v1h-1zM591 326h1v1h-1zM592 326h1v1h-1zM593 326h1v1h-1zM594 326h1v1h-1zM595 326h1v1h-1zM596 326h1v1h-1zM597 326h1v1h-1zM598 326h1v3h-1zM599 328h1v1h-1zM600 327h1v2h-1zM601 327h1v1h-1zM602 327h1v1h-1zM603 327h1v1h-1zM604 327h1v1h-1zM605 327h1v1h-1zM606 327h1v1h-1zM607 327h1v1h-1zM608 327h1v1h-1zM609 326h1v2h-1zM610 326h1v1h-1zM611 326h1v2h-1zM612 327h1v1h-1zM613 327h1v1h-1zM614 327h1v1h-1zM615 327h1v1h-1zM616 327h1v1h-1zM617 327h1v1h-1zM618 327h1v1h-1zM619 327h1v1h-1zM620 327h1v1h-1zM621 327h1v1h-1zM622 327h1v1h-1zM623 327h1v1h-1zM624 327h1v1h-1zM625 327h1v1h-1zM626 327h1v1h-1zM627 327h1v1h-1zM628 327h1v1h-1zM629 326h1v2h-1zM630 326h1v1h-1zM631 326h1v2h-1zM632 327h1v1h-1zM633 327h1v1h-1zM634 327h1v1h-1zM635 327h1v1h-1zM636 327h1v1h-1zM637 327h1v1h-1zM638 327h1v1h-1zM639 327h1v1h-1zM640 327h1v1h-1zM641 327h1v1h-1zM642 327h1v1h-1zM643 327h1v1h-1zM644 327h1v1h-1zM645 327h1v1h-1zM646 326h1v2h-1zM647 326h1v1h-1zM648 326h1v1h-1zM649 326h1v1h-1zM650 326h1v1h-1zM651 326h1v3h-1zM652 328h1v1h-1zM653 328h1v1h-1zM654 328h1v1h-1zM655 328h1v1h-1zM656 328h1v1h-1zM657 328h1v1h-1zM658 327h1v2h-1zM659 327h1v1h-1zM660 327h1v1h-1zM661 327h1v1h-1zM662 327h1v1h-1zM663 327h1v1h-1zM664 327h1v1h-1zM665 327h1v1h-1zM666 327h1v1h-1zM667 327h1v1h-1zM668 327h1v2h-1zM669 328h1v1h-1zM670 328h1v1h-1zM671 328h1v1h-1zM672 326h1v3h-1zM673 326h1v1h-1zM674 326h1v1h-1zM675 326h1v2h-1zM676 327h1v1h-1zM677 327h1v1h-1zM678 327h1v1h-1zM679 327h1v2h-1zM680 328h1v1h-1zM681 326h1v3h-1zM682 326h1v1h-1zM683 326h1v3h-1zM684 328h1v1h-1zM685 328h1v1h-1zM686 328h1v1h-1zM687 328h1v1h-1zM688 328h1v1h-1zM689 328h1v1h-1zM690 326h1v3h-1zM691 326h1v1h-1zM692 326h1v1h-1zM693 326h1v1h-1zM694 326h1v1h-1zM695 326h1v3h-1zM696 328h1v1h-1zM697 328h1v1h-1zM698 326h1v3h-1zM699 326h1v1h-1zM700 326h1v3h-1zM701 328h1v1h-1zM702 328h1v1h-1zM703 328h1v1h-1zM704 328h1v1h-1zM705 327h1v2h-1zM706 327h1v1h-1zM707 327h1v1h-1zM708 327h1v1h-1zM709 327h1v1h-1zM710 327h1v1h-1zM711 327h1v1h-1zM712 327h1v1h-1zM713 327h1v1h-1zM714 327h1v1h-1zM715 327h1v1h-1zM716 327h1v1h-1zM717 327h1v1h-1zM718 327h1v1h-1zM719 327h1v1h-1zM720 327h1v1h-1zM721 327h1v1h-1zM722 327h1v1h-1zM723 327h1v1h-1zM724 327h1v1h-1zM725 327h1v1h-1zM726 327h1v1h-1zM727 327h1v1h-1zM728 327h1v1h-1zM729 327h1v1h-1zM730 327h1v1h-1zM731 327h1v1h-1zM732 327h1v1h-1zM733 327h1v1h-1zM734 326h1v2h-1zM735 326h1v1h-1zM736 326h1v1h-1zM737 326h1v1h-1zM738 326h1v1h-1zM739 326h1v3h-1zM740 328h1v1h-1zM741 328h1v1h-1zM742 328h1v1h-1zM743 328h1v1h-1zM744 328h1v1h-1zM745 328h1v1h-1zM746 327h1v2h-1zM747 327h1v1h-1zM748 327h1v1h-1zM749 327h1v1h-1zM750 327h1v1h-1zM751 327h1v1h-1zM752 327h1v1h-1z" fill="#ff4040"/><rect x="168" y="337" width="585" height="1" fill="#3ab4f0"/><rect x="168" y="341" width="585" height="1" fill="#c8f060"/><path d="M168 654h1v1h-1zM169 654h1v1h-1zM170 654h1v1h-1zM171 654h1v1h-1zM172 654h1v1h-1zM173 654h1v1h-1zM174 650h1v5h-1zM175 650h1v1h-1zM176 650h1v1h-1zM177 650h1v2h-1zM178 651h1v1h-1zM179 651h1v2h-1zM180 652h1v2h-1zM181 653h1v2h-1zM182 654h1v1h-1zM183 654h1v2h-1zM184 655h1v1h-1zM185 655h1v2h-1zM186 655h1v2h-1zM187 655h1v1h-1zM188 655h1v1h-1zM189 653h1v3h-1zM190 653h1v1h-1zM191 653h1v1h-1zM192 653h1v1h-1zM193 653h1v1h-1zM194 653h1v1h-1zM195 653h1v1h-1zM196 653h1v1h-1zM197 653h1v1h-1zM198 653h1v1h-1zM199 652h1v2h-1zM200 649h1v4h-1zM201 649h1v1h-1zM202 649h1v1h-1zM203 649h1v2h-1zM204 650h1v2h-1zM205 651h1v2h-1zM206 652h1v2h-1zM207 653h1v1h-1zM208 653h1v2h-1zM209 654h1v2h-1zM210 654h1v2h-1zM211 654h1v1h-1zM212 654h1v1h-1zM213 653h1v2h-1zM214 653h1v1h-1zM215 653h1v1h-1zM216 650h1v4h-1zM217 650h1v1h-1zM218 650h1v1h-1zM219 650h1v2h-1zM220 651h1v1h-1zM221 651h1v2h-1zM222 652h1v1h-1zM223 652h1v2h-1zM224 653h1v1h-1zM225 653h1v2h-1zM226 654h1v1h-1zM227 654h1v2h-1zM228 655h1v1h-1zM229 654h1v2h-1zM230 654h1v1h-1zM231 653h1v2h-1zM232 653h1v1h-1zM233 653h1v1h-1zM234 653h1v1h-1zM235 651h1v3h-1zM236 651h1v1h-1zM237 651h1v1h-1zM238 651h1v2h-1zM239 652h1v2h-1zM240 653h1v1h-1zM241 653h1v2h-1zM242 654h1v1h-1zM243 654h1v2h-1zM244 655h1v1h-1zM245 655h1v1h-1zM246 655h1v1h-1zM247 655h1v1h-1zM248 652h1v4h-1zM249 652h1v1h-1zM250 652h1v1h-1zM251 652h1v1h-1zM252 652h1v1h-1zM253 652h1v1h-1zM254 652h1v1h-1zM255 652h1v1h-1zM256 652h1v1h-1zM257 651h1v2h-1zM258 648h1v4h-1zM259 648h1v1h-1zM260 648h1v1h-1zM261 648h1v1h-1zM262 648h1v2h-1zM263 649h1v1h-1zM264 649h1v2h-1zM265 650h1v2h-1zM266 651h1v1h-1zM267 651h1v2h-1zM268 652h1v2h-1zM269 653h1v1h-1zM270 653h1v2h-1zM271 654h1v1h-1zM272 654h1v1h-1zM273 654h1v1h-1zM274 652h1v3h-1zM275 652h1v1h-1zM276 652h1v1h-1zM277 652h1v1h-1zM278 651h1v2h-1zM279 650h1v2h-1zM280 650h1v1h-1zM281 650h1v1h-1zM282 650h1v2h-1zM283 651h1v2h-1zM284 652h1v2h-1zM285 653h1v1h-1zM286 653h1v2h-1zM287 654h1v1h-1zM288 653h1v2h-1zM289 653h1v1h-1zM290 652h1v2h-1zM291 652h1v1h-1zM292 652h1v1h-1zM293 652h1v1h-1zM294 649h1v4h-1zM295 649h1v1h-1zM296 649h1v2h-1zM297 650h1v1h-1zM298 650h1v2h-1zM299 651h1v1h-1zM300 651h1v2h-1zM301 652h1v1h-1zM302 652h1v2h-1zM303 653h1v2h-1zM304 653h1v2h-1zM305 653h1v1h-1zM306 652h1v2h-1zM307 652h1v1h-1zM308 652h1v1h-1zM309 652h1v1h-1zM310 652h1v1h-1zM311 652h1v1h-1zM312 652h1v1h-1zM313 652h1v1h-1zM314 651h1v2h-1zM315 648h1v4h-1zM316 648h1v1h-1zM317 648h1v1h-1zM318 648h1v1h-1zM319 648h1v2h-1zM320 649h1v2h-1zM321 650h1v2h-1zM322 651h1v1h-1zM323 651h1v2h-1zM324 652h1v2h-1zM325 653h1v2h-1zM326 653h1v2h-1zM327 651h1v3h-1zM328 651h1v1h-1zM329 651h1v1h-1zM330 651h1v1h-1zM331 651h1v1h-1zM332 651h1v1h-1zM333 651h1v1h-1zM334 651h1v1h-1zM335 651h1v1h-1zM336 650h1v2h-1zM337 648h1v3h-1zM338 648h1v1h-1zM339 648h1v2h-1zM340 649h1v2h-1zM341 650h1v1h-1zM342 650h1v2h-1zM343 651h1v1h-1zM344 651h1v2h-1zM345 652h1v1h-1zM346 652h1v2h-1zM347 653h1v1h-1zM348 653h1v1h-1zM349 651h1v3h-1zM350 651h1v1h-1zM351 651h1v1h-1zM352 651h1v1h-1zM353 651h1v1h-1zM354 651h1v1h-1zM355 651h1v1h-1zM356 651h1v1h-1zM357 651h1v1h-1zM358 651h1v1h-1zM359 650h1v2h-1zM360 647h1v4h-1zM361 647h1v1h-1zM362 647h1v1h-1zM363 647h1v1h-1zM364 647h1v2h-1zM365 648h1v2h-1zM366 649h1v1h-1zM367 649h1v2h-1zM368 650h1v1h-1zM369 650h1v2h-1zM370 651h1v2h-1zM371 652h1v1h-1zM372 652h1v2h-1zM373 653h1v1h-1zM374 653h1v1h-1zM375 653h1v1h-1zM376 653h1v1h-1zM377 651h1v3h-1zM378 651h1v1h-1zM379 651h1v1h-1zM380 651h1v1h-1zM381 651h1v1h-1zM382 651h1v1h-1zM383 651h1v1h-1zM384 650h1v2h-1zM385 647h1v4h-1zM386 647h1v1h-1zM387 647h1v2h-1zM388 648h1v1h-1zM389 648h1v2h-1zM390 649h1v1h-1zM391 649h1v2h-1zM392 650h1v2h-1zM393 651h1v1h-1zM394 651h1v2h-1zM395 652h1v2h-1zM396 653h1v1h-1zM397 653h1v1h-1zM398 650h1v4h-1zM399 650h1v1h-1zM400 650h1v1h-1zM401 650h1v1h-1zM402 650h1v1h-1zM403 650h1v1h-1zM404 650h1v1h-1zM405 650h1v1h-1zM406 649h1v2h-1zM407 647h1v3h-1zM408 647h1v1h-1zM409 647h1v1h-1zM410 647h1v1h-1zM411 647h1v2h-1zM412 648h1v1h-1zM413 648h1v2h-1zM414 649h1v2h-1zM415 650h1v2h-1zM416 651h1v2h-1zM417 652h1v1h-1zM418 652h1v1h-1zM419 652h1v1h-1zM420 652h1v1h-1zM421 650h1v3h-1zM422 650h1v1h-1zM423 650h1v1h-1zM424 650h1v1h-1zM425 650h1v1h-1zM426 650h1v1h-1zM427 650h1v1h-1zM428 650h1v1h-1zM429 650h1v1h-1zM430 650h1v1h-1zM431 649h1v2h-1zM432 647h1v3h-1zM433 647h1v1h-1zM434 647h1v2h-1zM435 648h1v1h-1zM436 648h1v2h-1zM437 649h1v2h-1zM438 650h1v1h-1zM439 650h1v2h-1zM440 651h1v1h-1zM441 651h1v2h-1zM442 652h1v1h-1zM443 652h1v1h-1zM444 652h1v1h-1zM445 650h1v3h-1zM446 650h1v1h-1zM447 650h1v1h-1zM448 650h1v1h-1zM449 648h1v3h-1zM450 648h1v1h-1zM451 648h1v1h-1zM452 648h1v2h-1zM453 649h1v2h-1zM454 650h1v1h-1zM455 650h1v2h-1zM456 651h1v2h-1zM457 652h1v1h-1zM458 651h1v2h-1zM459 651h1v1h-1zM460 651h1v1h-1zM461 650h1v2h-1zM462 650h1v1h-1zM463 650h1v1h-1zM464 650h1v1h-1zM465 650h1v1h-1zM466 650h1v1h-1zM467 650h1v1h-1zM468 650h1v1h-1zM469 650h1v1h-1zM470 648h1v3h-1zM471 648h1v1h-1zM472 648h1v1h-1zM473 648h1v1h-1zM474 648h1v2h-1zM475 649h1v1h-1zM476 649h1v2h-1zM477 650h1v1h-1zM478 650h1v2h-1zM479 651h1v2h-1zM480 652h1v1h-1zM481 651h1v2h-1zM482 649h1v3h-1zM483 649h1v1h-1zM484 649h1v1h-1zM485 649h1v1h-1zM486 649h1v1h-1zM487 649h1v1h-1zM488 649h1v1h-1zM489 649h1v1h-1zM490 648h1v2h-1zM491 647h1v2h-1zM492 647h1v1h-1zM493 647h1v1h-1zM494 647h1v2h-1zM495 648h1v2h-1zM496 649h1v2h-1zM497 650h1v2h-1zM498 651h1v1h-1zM499 651h1v1h-1zM500 651h1v1h-1zM501 649h1v3h-1zM502 649h1v1h-1zM503 649h1v1h-1zM504 649h1v1h-1zM505 649h1v1h-1zM506 648h1v2h-1zM507 646h1v3h-1zM508 646h1v1h-1zM509 646h1v1h-1zM510 646h1v1h-1zM511 646h1v2h-1zM512 647h1v2h-1zM513 648h1v1h-1zM514 648h1v2h-1zM515 649h1v2h-1zM516 650h1v1h-1zM517 650h1v2h-1zM518 651h1v1h-1zM519 651h1v1h-1zM520 651h1v1h-1zM521 649h1v3h-1zM522 649h1v1h-1zM523 649h1v1h-1zM524 649h1v1h-1zM525 649h1v1h-1zM526 649h1v1h-1zM527 649h1v1h-1zM528 649h1v1h-1zM529 648h1v2h-1zM530 646h1v3h-1zM531 646h1v1h-1zM532 646h1v1h-1zM533 646h1v2h-1zM534 647h1v1h-1zM535 647h1v2h-1zM536 648h1v2h-1zM537 649h1v1h-1zM538 649h1v2h-1zM539 650h1v2h-1zM540 650h1v2h-1zM541 650h1v1h-1zM542 649h1v2h-1zM543 649h1v1h-1zM544 649h1v1h-1zM545 649h1v1h-1zM546 649h1v1h-1zM547 649h1v1h-1zM548 649h1v1h-1zM549 649h1v1h-1zM550 649h1v1h-1zM551 645h1v5h-1zM552 645h1v1h-1zM553 645h1v2h-1zM554 646h1v1h-1zM555 646h1v2h-1zM556 647h1v1h-1zM557 647h1v2h-1zM558 648h1v1h-1zM559 648h1v2h-1zM560 649h1v2h-1zM561 650h1v2h-1zM562 651h1v1h-1zM563 650h1v2h-1zM564 649h1v2h-1zM565 649h1v1h-1zM566 649h1v1h-1zM567 647h1v3h-1zM568 647h1v1h-1zM569 647h1v1h-1zM570 647h1v2h-1zM571 648h1v2h-1zM572 649h1v2h-1zM573 650h1v1h-1zM574 650h1v2h-1zM575 650h1v2h-1zM576 650h1v1h-1zM577 650h1v1h-1zM578 649h1v2h-1zM579 649h1v1h-1zM580 649h1v1h-1zM581 649h1v1h-1zM582 649h1v1h-1zM583 649h1v1h-1zM584 649h1v1h-1zM585 647h1v3h-1zM586 647h1v1h-1zM587 647h1v1h-1zM588 647h1v1h-1zM589 647h1v2h-1zM590 648h1v1h-1zM591 648h1v2h-1zM592 649h1v2h-1zM593 650h1v2h-1zM594 651h1v1h-1zM595 650h1v2h-1zM596 650h1v1h-1zM597 649h1v2h-1zM598 649h1v1h-1zM599 649h1v1h-1zM600 649h1v1h-1zM601 649h1v1h-1zM602 649h1v1h-1zM603 649h1v1h-1zM604 649h1v1h-1zM605 649h1v1h-1zM606 649h1v1h-1zM607 648h1v2h-1zM608 647h1v2h-1zM609 647h1v1h-1zM610 647h1v2h-1zM611 648h1v2h-1zM612 649h1v2h-1zM613 650h1v2h-1zM614 650h1v2h-1zM615 650h1v1h-1zM616 649h1v2h-1zM617 649h1v1h-1zM618 649h1v1h-1zM619 649h1v1h-1zM620 649h1v1h-1zM621 648h1v2h-1zM622 647h1v2h-1zM623 647h1v1h-1zM624 647h1v1h-1zM625 647h1v1h-1zM626 647h1v2h-1zM627 648h1v1h-1zM628 648h1v2h-1zM629 649h1v2h-1zM630 650h1v1h-1zM631 650h1v2h-1zM632 651h1v1h-1zM633 651h1v1h-1zM634 651h1v1h-1zM635 649h1v3h-1zM636 649h1v1h-1zM637 649h1v1h-1zM638 649h1v1h-1zM639 649h1v1h-1zM640 649h1v1h-1zM641 649h1v1h-1zM642 649h1v1h-1zM643 649h1v1h-1zM644 648h1v2h-1zM645 647h1v2h-1zM646 647h1v1h-1zM647 647h1v1h-1zM648 647h1v2h-1zM649 648h1v2h-1zM650 649h1v2h-1zM651 650h1v2h-1zM652 650h1v2h-1zM653 649h1v2h-1zM654 649h1v1h-1zM655 649h1v1h-1zM656 649h1v1h-1zM657 646h1v4h-1zM658 646h1v1h-1zM659 646h1v1h-1zM660 646h1v1h-1zM661 646h1v2h-1zM662 647h1v2h-1zM663 648h1v1h-1zM664 648h1v2h-1zM665 649h1v1h-1zM666 649h1v2h-1zM667 650h1v2h-1zM668 651h1v1h-1zM669 650h1v2h-1zM670 650h1v1h-1zM671 649h1v2h-1zM672 649h1v1h-1zM673 649h1v1h-1zM674 649h1v1h-1zM675 649h1v1h-1zM676 649h1v1h-1zM677 649h1v1h-1zM678 649h1v1h-1zM679 649h1v1h-1zM680 648h1v2h-1zM681 646h1v3h-1zM682 646h1v1h-1zM683 646h1v1h-1zM684 646h1v2h-1zM685 647h1v1h-1zM686 647h1v2h-1zM687 648h1v2h-1zM688 649h1v1h-1zM689 649h1v2h-1zM690 650h1v1h-1zM691 650h1v2h-1zM692 650h1v2h-1zM693 650h1v1h-1zM694 650h1v1h-1zM695 649h1v2h-1zM696 649h1v1h-1zM697 649h1v1h-1zM698 646h1v4h-1zM699 646h1v1h-1zM700 646h1v1h-1zM701 646h1v1h-1zM702 646h1v2h-1zM703 647h1v2h-1zM704 648h1v2h-1zM705 649h1v1h-1zM706 649h1v2h-1zM707 650h1v1h-1zM708 650h1v2h-1zM709 651h1v1h-1zM710 650h1v2h-1zM711 650h1v1h-1zM712 650h1v1h-1zM713 649h1v2h-1zM714 649h1v1h-1zM715 649h1v1h-1zM716 649h1v1h-1zM717 649h1v1h-1zM718 649h1v1h-1zM719 649h1v1h-1zM720 649h1v1h-1zM721 649h1v1h-1zM722 648h1v2h-1zM723 647h1v2h-1zM724 647h1v1h-1zM725 647h1v1h-1zM726 647h1v1h-1zM727 647h1v2h-1zM728 648h1v1h-1zM729 648h1v2h-1zM730 649h1v1h-1zM731 649h1v2h-1zM732 650h1v1h-1zM733 650h1v2h-1zM734 651h1v1h-1zM735 651h1v1h-1zM736 649h1v3h-1zM737 649h1v1h-1zM738 649h1v1h-1zM739 649h1v1h-1zM740 649h1v1h-1zM741 649h1v1h-1zM742 648h1v2h-1zM743 647h1v2h-1zM744 647h1v1h-1zM745 647h1v1h-1zM746 647h1v1h-1zM747 647h1v2h-1zM748 648h1v2h-1zM749 649h1v1h-1zM750 649h1v2h-1zM751 650h1v2h-1zM752 651h1v1h-1z" fill="#1efc1e"/></svg>
<div class="a" style="left:777px;top:207px;width:94px;height:150px;background:linear-gradient(90deg,#cfcfcf 0,#d4d4d4 6px,#c6c6c6 13px,#c0c0c0 16px,#c0c0c0 80px,#a8a8a8 88px,#888 93px,#555 94px);box-shadow:inset 0 1px 0 #dadada, inset 0 -1px 0 #8a8a8a"></div>
<div class="a" style="left:793px;top:211px;font-size:12px;line-height:16px;color:#1414ff;letter-spacing:-0.6px">CH1</div>
<div class="a" style="left:828px;top:209px;width:29px;height:21px;background:#000;border-right:1px solid #d0d0d0;border-bottom:1px solid #d0d0d0"></div>
<svg class="a" style="left:828px;top:209px" width="28" height="20"><path d="M2.5 15.5 L10.5 3.5 L18.5 15.5 L26.5 3.5" stroke="#ffffff" stroke-width="1" fill="none"/></svg>
<div class="a" style="left:793px;top:236px;font-size:12px;line-height:16px;color:#1414ff;letter-spacing:-0.6px">CH2</div>
<div class="a" style="left:828px;top:234px;width:29px;height:21px;background:#000;border-right:1px solid #d0d0d0;border-bottom:1px solid #d0d0d0"></div>
<svg class="a" style="left:828px;top:234px" width="28" height="20"><path d="M2.5 15.5 L10.5 3.5 L18.5 15.5 L26.5 3.5" stroke="#ff4040" stroke-width="1" fill="none"/></svg>
<div class="a" style="left:793px;top:261px;font-size:12px;line-height:16px;color:#1414ff;letter-spacing:-0.6px">CH3</div>
<div class="a" style="left:828px;top:259px;width:29px;height:21px;background:#000;border-right:1px solid #d0d0d0;border-bottom:1px solid #d0d0d0"></div>
<svg class="a" style="left:828px;top:259px" width="28" height="20"><path d="M2.5 15.5 L10.5 3.5 L18.5 15.5 L26.5 3.5" stroke="#22ee22" stroke-width="1" fill="none"/></svg>
<div class="a" style="left:793px;top:286px;font-size:12px;line-height:16px;color:#1414ff;letter-spacing:-0.6px">CH4</div>
<div class="a" style="left:828px;top:284px;width:29px;height:21px;background:#000;border-right:1px solid #d0d0d0;border-bottom:1px solid #d0d0d0"></div>
<svg class="a" style="left:828px;top:284px" width="28" height="20"><path d="M2.5 15.5 L10.5 3.5 L18.5 15.5 L26.5 3.5" stroke="#3ab4f0" stroke-width="1" fill="none"/></svg>
<div class="a" style="left:793px;top:311px;font-size:12px;line-height:16px;color:#1414ff;letter-spacing:-0.6px">CH5</div>
<div class="a" style="left:828px;top:309px;width:29px;height:21px;background:#000;border-right:1px solid #d0d0d0;border-bottom:1px solid #d0d0d0"></div>
<svg class="a" style="left:828px;top:309px" width="28" height="20"><path d="M2.5 15.5 L10.5 3.5 L18.5 15.5 L26.5 3.5" stroke="#c8f060" stroke-width="1" fill="none"/></svg>
<div class="a" style="left:793px;top:336px;font-size:12px;line-height:16px;color:#1414ff;letter-spacing:-0.6px">CH6</div>
<div class="a" style="left:828px;top:334px;width:29px;height:21px;background:#000;border-right:1px solid #d0d0d0;border-bottom:1px solid #d0d0d0"></div>
<svg class="a" style="left:828px;top:334px" width="28" height="20"><path d="M2.5 15.5 L10.5 3.5 L18.5 15.5 L26.5 3.5" stroke="#b050ff" stroke-width="1" fill="none"/></svg>
<div class="a" style="left:885px;top:208px;width:90px;height:37px;border:1px solid #3c3c3c;background:#66f51e;box-shadow:inset 2px 2px 2px #90ff60, inset -3px -3px 2px #3cb000"></div>
<div class="a" style="left:885px;top:209px;width:90px;height:37px;text-align:center;font-size:18px;line-height:37px;color:#1a1aff;white-space:nowrap">开始采集</div>
<div class="a" style="left:885px;top:255px;width:90px;height:37px;border:1px solid #3c3c3c;background:#ffff30;box-shadow:inset 2px 2px 2px #ffffa0, inset -3px -3px 2px #c8c000"></div>
<div class="a" style="left:885px;top:256px;width:90px;height:37px;text-align:center;font-size:18px;line-height:37px;color:#1a1aff;white-space:nowrap">清零</div>
<div class="a" style="left:885px;top:302px;width:90px;height:37px;border:1px solid #3c3c3c;background:#ff8c1a;box-shadow:inset 2px 2px 2px #ffb060, inset -3px -3px 2px #c05800"></div>
<div class="a" style="left:885px;top:303px;width:90px;height:37px;text-align:center;font-size:18px;line-height:37px;color:#1a1aff;white-space:nowrap">存储数据</div>
<div class="a" style="left:885px;top:350px;width:90px;height:37px;border:1px solid #3c3c3c;background:#a020ff;box-shadow:inset 2px 2px 2px #c070ff, inset -3px -3px 2px #6800c0"></div>
<div class="a" style="left:885px;top:351px;width:90px;height:37px;text-align:center;font-size:18px;line-height:37px;color:#1a1aff;white-space:nowrap">读取数据</div>
<div class="a" style="left:1003px;top:350px;width:90px;height:37px;border:1px solid #3c3c3c;background:#ff1a1a;box-shadow:inset 2px 2px 2px #ff7070, inset -3px -3px 2px #b80000"></div>
<div class="a" style="left:1003px;top:351px;width:90px;height:37px;text-align:center;font-size:18px;line-height:37px;color:#1a1aff;white-space:nowrap">停止</div>
<div class="a" style="left:986px;top:206px;font-size:12px;line-height:16px;color:#1414ff;white-space:nowrap">采集状态</div>
<div class="a" style="left:984px;top:300px;font-size:12px;line-height:16px;color:#1414ff;white-space:nowrap">存储状态</div>
<svg class="a" style="left:995px;top:222px" width="22" height="22"><defs><radialGradient id="g1006" cx="0.35" cy="0.3" r="0.75"><stop offset="0" stop-color="#d0ffb0"/><stop offset="0.3" stop-color="#66ff22"/><stop offset="1" stop-color="#3cc010"/></radialGradient><linearGradient id="r1006" x1="0" y1="0" x2="1" y2="1"><stop offset="0.3" stop-color="#8c8c8c"/><stop offset="0.75" stop-color="#ffffff"/></linearGradient></defs><circle cx="11" cy="11" r="9.5" fill="url(#r1006)" opacity="0.9"/><circle cx="11" cy="11" r="8" fill="#b4b4b4"/><circle cx="11" cy="11" r="7.5" fill="url(#g1006)"/></svg>
<svg class="a" style="left:993px;top:316px" width="22" height="22"><defs><radialGradient id="g1004" cx="0.35" cy="0.3" r="0.75"><stop offset="0" stop-color="#8aa88a"/><stop offset="0.3" stop-color="#2e5a1e"/><stop offset="1" stop-color="#183810"/></radialGradient><linearGradient id="r1004" x1="0" y1="0" x2="1" y2="1"><stop offset="0.3" stop-color="#8c8c8c"/><stop offset="0.75" stop-color="#ffffff"/></linearGradient></defs><circle cx="11" cy="11" r="9.5" fill="url(#r1004)" opacity="0.9"/><circle cx="11" cy="11" r="8" fill="#b4b4b4"/><circle cx="11" cy="11" r="7.5" fill="url(#g1004)"/></svg>
<div class="a" style="left:796px;top:412px;font-size:29px;line-height:40px;color:#1414ff;letter-spacing:-1.3px;white-space:nowrap">Fx</div>
<div class="a" style="left:838px;top:412px;width:131px;height:42px;background:#d4d4d4;border-style:solid;border-width:4px;border-color:#909090 #bcbcbc #c0c0c0 #a2a2a2"></div>
<div class="a" style="left:846px;top:415px;font-size:27px;line-height:38px;letter-spacing:0px;color:#000;white-space:nowrap">0.42795</div>
<div class="a" style="left:976px;top:422px;font-size:18px;line-height:22px;font-weight:bold;color:#000;white-space:nowrap">N</div>
<div class="a" style="left:796px;top:460px;font-size:29px;line-height:40px;color:#1414ff;letter-spacing:-1.3px;white-space:nowrap">Fy</div>
<div class="a" style="left:838px;top:460px;width:131px;height:42px;background:#d4d4d4;border-style:solid;border-width:4px;border-color:#909090 #bcbcbc #c0c0c0 #a2a2a2"></div>
<div class="a" style="left:846px;top:463px;font-size:27px;line-height:38px;letter-spacing:0px;color:#000;white-space:nowrap">0.04725</div>
<div class="a" style="left:976px;top:470px;font-size:18px;line-height:22px;font-weight:bold;color:#000;white-space:nowrap">N</div>
<div class="a" style="left:796px;top:507px;font-size:29px;line-height:40px;color:#1414ff;letter-spacing:-1.3px;white-space:nowrap">Fz</div>
<div class="a" style="left:838px;top:507px;width:131px;height:42px;background:#d4d4d4;border-style:solid;border-width:4px;border-color:#909090 #bcbcbc #c0c0c0 #a2a2a2"></div>
<div class="a" style="left:846px;top:510px;font-size:27px;line-height:38px;letter-spacing:0px;color:#000;white-space:nowrap">-1.33347</div>
<div class="a" style="left:976px;top:517px;font-size:18px;line-height:22px;font-weight:bold;color:#000;white-space:nowrap">N</div>
<div class="a" style="left:796px;top:554px;font-size:29px;line-height:40px;color:#1414ff;letter-spacing:-1.3px;white-space:nowrap">Tx</div>
<div class="a" style="left:838px;top:554px;width:131px;height:42px;background:#d4d4d4;border-style:solid;border-width:4px;border-color:#909090 #bcbcbc #c0c0c0 #a2a2a2"></div>
<div class="a" style="left:846px;top:557px;font-size:27px;line-height:38px;letter-spacing:0px;color:#000;white-space:nowrap">0.00553</div>
<div class="a" style="left:976px;top:564px;font-size:18px;line-height:22px;font-weight:bold;color:#000;white-space:nowrap">Nm</div>
<div class="a" style="left:796px;top:601px;font-size:29px;line-height:40px;color:#1414ff;letter-spacing:-1.3px;white-space:nowrap">Ty</div>
<div class="a" style="left:838px;top:601px;width:131px;height:42px;background:#d4d4d4;border-style:solid;border-width:4px;border-color:#909090 #bcbcbc #c0c0c0 #a2a2a2"></div>
<div class="a" style="left:846px;top:604px;font-size:27px;line-height:38px;letter-spacing:0px;color:#000;white-space:nowrap">-0.01126</div>
<div class="a" style="left:976px;top:611px;font-size:18px;line-height:22px;font-weight:bold;color:#000;white-space:nowrap">Nm</div>
<div class="a" style="left:796px;top:649px;font-size:29px;line-height:40px;color:#1414ff;letter-spacing:-1.3px;white-space:nowrap">Tz</div>
<div class="a" style="left:838px;top:649px;width:131px;height:42px;background:#d4d4d4;border-style:solid;border-width:4px;border-color:#909090 #bcbcbc #c0c0c0 #a2a2a2"></div>
<div class="a" style="left:846px;top:652px;font-size:27px;line-height:38px;letter-spacing:0px;color:#000;white-space:nowrap">0.00535</div>
<div class="a" style="left:976px;top:659px;font-size:18px;line-height:22px;font-weight:bold;color:#000;white-space:nowrap">Nm</div></body></html>
